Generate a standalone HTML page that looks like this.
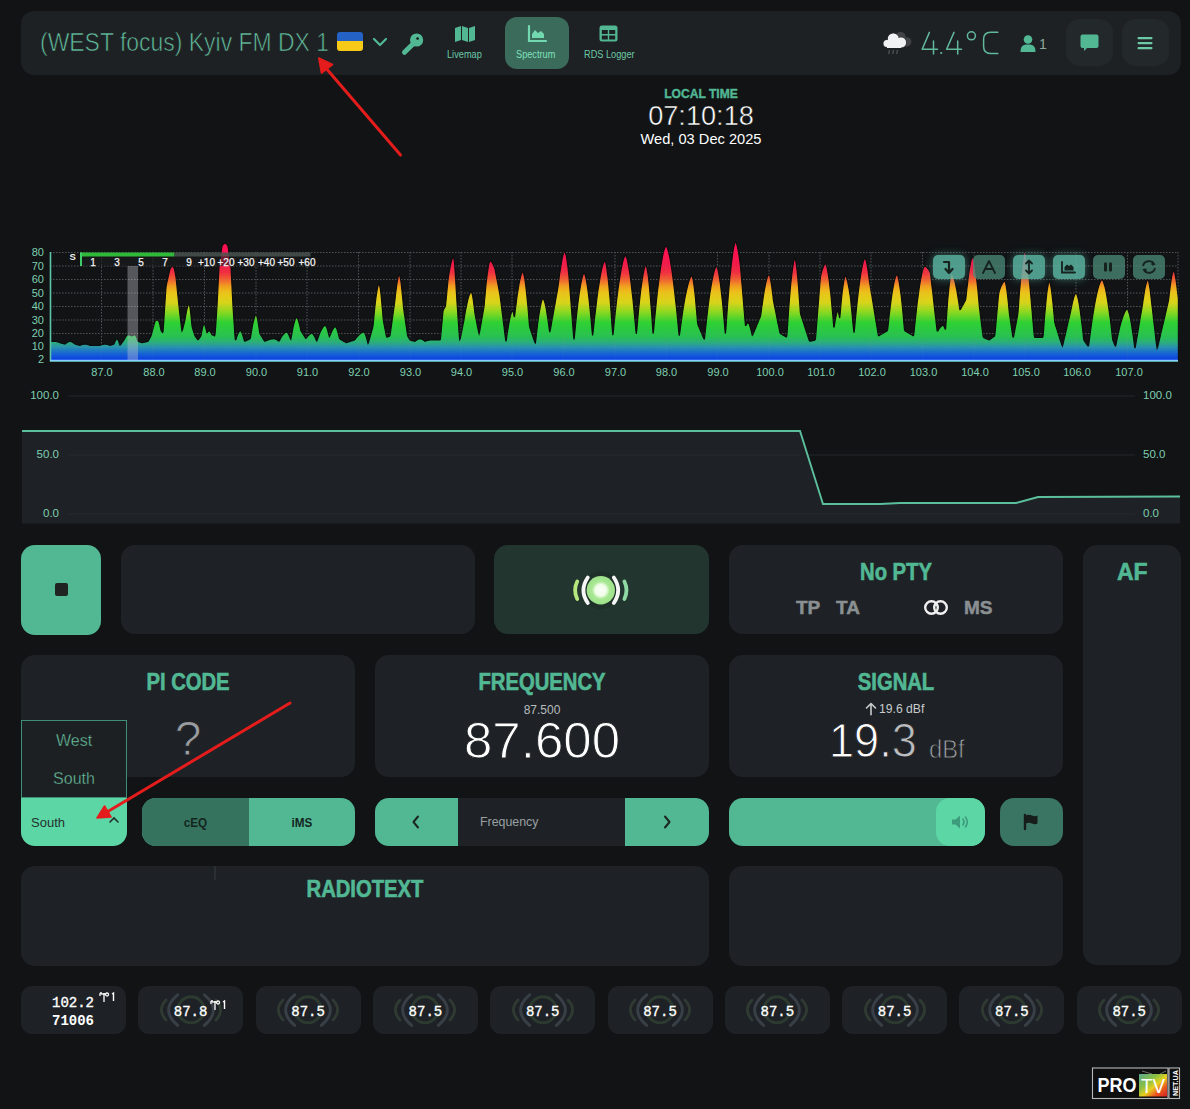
<!DOCTYPE html>
<html><head><meta charset="utf-8">
<style>
*{margin:0;padding:0;box-sizing:border-box}
html,body{width:1190px;height:1109px;overflow:hidden;background:#111315;font-family:"Liberation Sans",sans-serif}
.a{position:absolute}
.p{position:absolute;background:#1e2226;border-radius:14px}
.t{position:absolute;white-space:nowrap;line-height:1}
.c{transform-origin:center top}
.teal{color:#52b894}
.thin{-webkit-text-stroke:1.0px #1e2226}
.thin2{-webkit-text-stroke:0.8px #1e2226}
.h{font-weight:bold;color:#52b894;font-size:23px;-webkit-text-stroke:0.6px #52b894}
svg{position:absolute;overflow:visible}
</style></head><body>

<!-- HEADER -->
<div class="p" style="left:21px;top:11px;width:1160px;height:64px;border-radius:13px;background:#1d2124"></div>
<div class="t" id="title" style="left:40px;top:29px;font-size:26.5px;color:#62bd9c;-webkit-text-stroke:0.7px #1d2124;transform:scaleX(0.866);transform-origin:left top">(WEST focus) Kyiv FM DX 1</div>
<div class="a" style="left:337px;top:31.5px;width:25.5px;height:19.5px;border-radius:3px;overflow:hidden">
  <div style="height:9.5px;background:#2462c6"></div><div style="height:10px;background:#f6ca16"></div>
</div>
<svg style="left:372px;top:36px" width="16" height="12" viewBox="0 0 16 12"><path d="M2,3 L8,9 L14,3" fill="none" stroke="#52b894" stroke-width="2.2" stroke-linecap="round" stroke-linejoin="round"/></svg>
<!-- key -->
<svg style="left:0;top:0" width="1190" height="80" viewBox="0 0 1190 80">
  <path d="M412.5,44.5 L404.5,52.3" stroke="#52b894" stroke-width="5" stroke-linecap="round"/>
  <circle cx="416.6" cy="40" r="6.6" fill="#52b894"/>
  <circle cx="417.6" cy="38.6" r="1.4" fill="#1d2124"/>
</svg>
<!-- livemap -->
<svg style="left:454px;top:25px" width="22" height="17" viewBox="0 0 22 17">
  <path d="M1,3 L7,1 L7,15 L1,17 Z M8,1 L14,3 L14,17 L8,15 Z M15,3 L21,1 L21,15 L15,17 Z" fill="#52b894"/>
</svg>
<div class="t" style="left:447px;top:50px;font-size:10px;color:#6cc9a6;transform:scaleX(0.92);transform-origin:left top">Livemap</div>
<!-- spectrum active -->
<div class="a" style="left:505px;top:17px;width:64px;height:52px;border-radius:12px;background:#3a6b5b"></div>
<svg style="left:527px;top:25px" width="20" height="18" viewBox="0 0 20 18">
  <path d="M2,1 L2,16 L19,16" fill="none" stroke="#72d8b0" stroke-width="2.2" stroke-linecap="round"/>
  <path d="M5,13 L5,9 L8,5 L11,8 L14,6 L17,9 L17,13 Z" fill="#72d8b0"/>
</svg>
<div class="t" style="left:516px;top:50px;font-size:10px;color:#7fe0bb;transform:scaleX(0.92);transform-origin:left top">Spectrum</div>
<!-- rds logger -->
<svg style="left:599px;top:25px" width="19" height="17" viewBox="0 0 19 17">
  <rect x="0.5" y="0.5" width="18" height="16" rx="2.5" fill="#52b894"/>
  <rect x="2.8" y="5" width="6" height="4" fill="#1d2124"/><rect x="10.2" y="5" width="6" height="4" fill="#1d2124"/>
  <rect x="2.8" y="10.5" width="6" height="4" fill="#1d2124"/><rect x="10.2" y="10.5" width="6" height="4" fill="#1d2124"/>
</svg>
<div class="t" style="left:584px;top:50px;font-size:10px;color:#6cc9a6;transform:scaleX(0.92);transform-origin:left top">RDS Logger</div>
<!-- weather -->
<svg style="left:0;top:0" width="1190" height="80" viewBox="0 0 1190 80">
  <g fill="#404346"><circle cx="900.5" cy="37" r="5.2"/><circle cx="906.8" cy="41.8" r="4.6"/><rect x="897" y="40" width="10" height="6.5"/></g>
  <g fill="#f0f1f2" stroke="#1d2124" stroke-width="0.8"><circle cx="887.2" cy="43.5" r="3.8"/><circle cx="893.3" cy="38.8" r="5.6"/><circle cx="901" cy="42.5" r="5.2"/></g>
  <g fill="#f0f1f2"><rect x="887" y="42" width="14" height="6"/><circle cx="887.2" cy="43.5" r="3.6"/><circle cx="893.3" cy="38.8" r="5.4"/><circle cx="901" cy="42.5" r="5"/></g>
  <path d="M889.5,50 l-0.8,4 M893.5,50 l-0.8,4 M897.5,50 l-0.8,4" stroke="#4a4e52" stroke-width="1.4"/>
</svg>
<svg style="left:0;top:0" width="1190" height="80" viewBox="0 0 1190 80">
  <g fill="none" stroke="#62b89a" stroke-width="1.5" stroke-linecap="round" stroke-linejoin="round">
    <path d="M929.4,32.4 L922.2,49.2 H937.5 M933.5,41 V54"/>
    <path d="M954,32.4 L946.6,49.2 H961.5 M957.7,41 V54"/>
    <circle cx="971.4" cy="35.8" r="4"/>
    <path d="M997.8,32.2 H990.5 Q983.6,32.2 983.6,39.5 V46.2 Q983.6,53.4 990.5,53.4 H997.8"/>
  </g>
  <circle cx="941.2" cy="53" r="1.1" fill="#62b89a"/>
</svg>
<!-- person -->
<svg style="left:1020px;top:35px" width="16" height="17" viewBox="0 0 16 17">
  <circle cx="8" cy="4.5" r="4.3" fill="#52b894"/><path d="M0.5,17 C0.5,11 3,9.5 8,9.5 C13,9.5 15.5,11 15.5,17 Z" fill="#52b894"/>
</svg>
<div class="t" style="left:1039px;top:37px;font-size:14px;color:#8fa89c">1</div>
<!-- chat -->
<div class="a" style="left:1066px;top:19px;width:47px;height:47px;border-radius:14px;background:#23282b"></div>
<svg style="left:1080px;top:34px" width="19" height="18" viewBox="0 0 19 18">
  <path d="M2.5,0.5 H16.5 Q18.5,0.5 18.5,2.5 V12 Q18.5,14 16.5,14 H7 L4,17 L4,14 H2.5 Q0.5,14 0.5,12 V2.5 Q0.5,0.5 2.5,0.5 Z" fill="#52b894"/>
</svg>
<!-- menu -->
<div class="a" style="left:1122px;top:19px;width:47px;height:47px;border-radius:14px;background:#23282b"></div>
<svg style="left:1137px;top:36px" width="16" height="14" viewBox="0 0 16 14">
  <rect x="0.5" y="1" width="15" height="2.2" rx="1" fill="#6cc9a6"/><rect x="0.5" y="6" width="15" height="2.2" rx="1" fill="#6cc9a6"/><rect x="0.5" y="11" width="15" height="2.2" rx="1" fill="#6cc9a6"/>
</svg>

<!-- LOCAL TIME -->
<div class="t c" style="left:601px;width:200px;text-align:center;top:87px;font-size:13px;font-weight:bold;color:#52b894;-webkit-text-stroke:0.4px #52b894;transform:scaleX(0.93)">LOCAL TIME</div>
<div class="t c" style="left:601px;width:200px;text-align:center;top:102px;font-size:28px;color:#fff;-webkit-text-stroke:0.5px #111315;transform:scaleX(0.97)">07:10:18</div>
<div class="t c" style="left:601px;width:200px;text-align:center;top:131px;font-size:15px;color:#fff;transform:scaleX(0.975)">Wed, 03 Dec 2025</div>

<!-- SPECTRUM -->
<svg style="left:0;top:0" width="1190" height="400" viewBox="0 0 1190 400">
  <defs>
    <linearGradient id="g" gradientUnits="userSpaceOnUse" x1="0" y1="360" x2="0" y2="245">
      <stop offset="0" stop-color="#0a3ce6"/>
      <stop offset="0.058" stop-color="#1766d2"/>
      <stop offset="0.11" stop-color="#2790b0"/>
      <stop offset="0.15" stop-color="#2cac80"/>
      <stop offset="0.20" stop-color="#27c052"/>
      <stop offset="0.327" stop-color="#2fd132"/>
      <stop offset="0.42" stop-color="#8ed820"/>
      <stop offset="0.50" stop-color="#d8d41a"/>
      <stop offset="0.585" stop-color="#ecc418"/>
      <stop offset="0.64" stop-color="#f0a020"/>
      <stop offset="0.70" stop-color="#f06030"/>
      <stop offset="0.76" stop-color="#f03040"/>
      <stop offset="0.82" stop-color="#f01c48"/>
      <stop offset="0.94" stop-color="#ff1050"/>
    </linearGradient>
  </defs>
  
  <g stroke="#9aa0a4" stroke-width="1" stroke-dasharray="1.5,1.5" opacity="0.38">
    <path d="M50,252.5 H1178 M50,266 H1178 M50,279.5 H1178 M50,293 H1178 M50,306.5 H1178 M50,320 H1178 M50,333.5 H1178 M50,347 H1178"/>
    <path d="M101.5,252 V360 M153,252 V360 M204.5,252 V360 M256,252 V360 M307,252 V360 M358.5,252 V360 M410,252 V360 M461,252 V360 M512,252 V360 M563.5,252 V360 M615,252 V360 M666,252 V360 M717.5,252 V360 M769,252 V360 M820,252 V360 M871,252 V360 M922.5,252 V360 M974,252 V360 M1025,252 V360 M1076,252 V360 M1127.5,252 V360 M1178,252 V360"/>
  </g>
  <path d="M50.0,341.4 L50.5,341.4 L51.0,341.4 L51.5,341.4 L52.0,341.4 L52.5,341.4 L53.0,341.4 L53.5,341.4 L54.0,341.4 L54.5,341.4 L55.0,341.4 L55.5,341.4 L56.0,341.5 L56.5,341.6 L57.0,341.7 L57.5,341.8 L58.0,342.0 L58.5,342.1 L59.0,342.3 L59.5,342.5 L60.0,342.7 L60.5,342.8 L61.0,343.0 L61.5,343.1 L62.0,343.3 L62.5,343.4 L63.0,343.5 L63.5,343.7 L64.0,343.8 L64.5,343.9 L65.0,344.0 L65.5,343.6 L66.0,343.2 L66.5,342.9 L67.0,342.5 L67.5,342.2 L68.0,342.0 L68.5,341.7 L69.0,341.6 L69.5,341.4 L70.0,341.4 L70.5,341.4 L71.0,341.6 L71.5,341.7 L72.0,342.0 L72.5,342.2 L73.0,342.5 L73.5,342.9 L74.0,343.2 L74.5,343.6 L75.0,344.0 L75.5,344.2 L76.0,344.3 L76.5,344.5 L77.0,344.6 L77.5,344.7 L78.0,344.9 L78.5,345.0 L79.0,345.1 L79.5,345.3 L80.0,345.3 L80.5,345.2 L81.0,345.0 L81.5,344.8 L82.0,344.6 L82.5,344.5 L83.0,344.4 L83.5,344.2 L84.0,344.2 L84.5,344.1 L85.0,344.1 L85.5,344.1 L86.0,344.2 L86.5,344.2 L87.0,344.4 L87.5,344.5 L88.0,344.6 L88.5,344.8 L89.0,345.0 L89.5,345.2 L90.0,345.4 L90.5,345.4 L91.0,345.4 L91.5,345.4 L92.0,345.4 L92.5,345.4 L93.0,345.4 L93.5,345.4 L94.0,345.4 L94.5,345.4 L95.0,345.4 L95.5,345.4 L96.0,345.4 L96.5,345.4 L97.0,345.4 L97.5,345.4 L98.0,345.4 L98.5,345.4 L99.0,345.4 L99.5,345.4 L100.0,345.4 L100.5,345.2 L101.0,345.0 L101.5,344.8 L102.0,344.6 L102.5,344.5 L103.0,344.4 L103.5,344.2 L104.0,344.2 L104.5,344.1 L105.0,344.1 L105.5,344.1 L106.0,344.2 L106.5,344.2 L107.0,344.4 L107.5,344.5 L108.0,344.6 L108.5,344.8 L109.0,345.0 L109.5,345.2 L110.0,345.3 L110.5,345.2 L111.0,345.1 L111.5,344.9 L112.0,344.7 L112.5,344.6 L113.0,344.4 L113.5,344.2 L114.0,343.9 L114.5,342.7 L115.0,341.5 L115.5,340.4 L116.0,339.6 L116.5,339.0 L117.0,338.8 L117.5,339.1 L118.0,339.8 L118.5,340.9 L119.0,342.2 L119.5,343.7 L120.0,345.0 L120.5,344.7 L121.0,344.1 L121.5,343.4 L122.0,342.7 L122.5,342.0 L123.0,341.4 L123.5,340.7 L124.0,340.0 L124.5,339.0 L125.0,338.0 L125.5,337.1 L126.0,336.4 L126.5,335.7 L127.0,335.2 L127.5,334.9 L128.0,334.7 L128.5,334.7 L129.0,334.8 L129.5,334.9 L130.0,335.1 L130.5,335.3 L131.0,335.5 L131.5,335.7 L132.0,335.9 L132.5,335.6 L133.0,335.3 L133.5,335.1 L134.0,334.9 L134.5,334.7 L135.0,334.7 L135.5,335.1 L136.0,335.8 L136.5,336.8 L137.0,338.1 L137.5,339.7 L138.0,341.1 L138.5,341.5 L139.0,341.7 L139.5,341.9 L140.0,342.0 L140.5,342.2 L141.0,342.4 L141.5,342.5 L142.0,342.7 L142.5,342.6 L143.0,342.5 L143.5,342.4 L144.0,342.3 L144.5,342.2 L145.0,342.0 L145.5,341.9 L146.0,341.8 L146.5,341.7 L147.0,341.6 L147.5,341.5 L148.0,341.2 L148.5,340.5 L149.0,339.6 L149.5,338.7 L150.0,337.8 L150.5,336.9 L151.0,335.8 L151.5,334.1 L152.0,332.3 L152.5,330.4 L153.0,328.6 L153.5,326.7 L154.0,324.9 L154.5,323.0 L155.0,321.4 L155.5,320.9 L156.0,320.5 L156.5,320.3 L157.0,320.1 L157.5,319.9 L158.0,320.0 L158.5,320.5 L159.0,321.7 L159.5,323.3 L160.0,325.4 L160.5,327.9 L161.0,330.3 L161.5,331.3 L162.0,332.0 L162.5,332.6 L163.0,331.9 L163.5,325.5 L164.0,317.6 L164.5,309.8 L165.0,301.9 L165.5,294.1 L166.0,287.2 L166.5,284.0 L167.0,281.9 L167.5,279.7 L168.0,277.5 L168.5,275.3 L169.0,273.1 L169.5,270.9 L170.0,269.0 L170.5,268.1 L171.0,267.4 L171.5,266.9 L172.0,266.5 L172.5,266.2 L173.0,266.2 L173.5,266.7 L174.0,267.9 L174.5,269.5 L175.0,271.6 L175.5,274.1 L176.0,277.2 L176.5,281.7 L177.0,286.7 L177.5,291.6 L178.0,296.5 L178.5,301.5 L179.0,306.3 L179.5,310.7 L180.0,314.9 L180.5,319.2 L181.0,323.4 L181.5,327.7 L182.0,330.9 L182.5,329.9 L183.0,327.9 L183.5,325.9 L184.0,323.9 L184.5,321.9 L185.0,319.7 L185.5,316.7 L186.0,313.8 L186.5,311.2 L187.0,308.9 L187.5,307.0 L188.0,305.4 L188.5,304.3 L189.0,304.0 L189.5,305.1 L190.0,307.6 L190.5,311.1 L191.0,315.6 L191.5,320.8 L192.0,325.8 L192.5,328.1 L193.0,329.7 L193.5,331.3 L194.0,332.9 L194.5,334.4 L195.0,335.8 L195.5,336.7 L196.0,337.3 L196.5,338.0 L197.0,338.7 L197.5,339.4 L198.0,339.8 L198.5,339.4 L199.0,338.7 L199.5,338.0 L200.0,337.3 L200.5,336.7 L201.0,335.6 L201.5,332.9 L202.0,330.2 L202.5,327.8 L203.0,325.9 L203.5,324.6 L204.0,324.1 L204.5,324.5 L205.0,325.5 L205.5,326.9 L206.0,328.8 L206.5,330.9 L207.0,332.7 L207.5,332.3 L208.0,331.5 L208.5,330.9 L209.0,330.7 L209.5,330.9 L210.0,331.3 L210.5,331.9 L211.0,332.7 L211.5,333.6 L212.0,334.5 L212.5,334.9 L213.0,335.1 L213.5,335.3 L214.0,335.5 L214.5,335.8 L215.0,334.7 L215.5,328.6 L216.0,321.2 L216.5,313.8 L217.0,306.0 L217.5,296.3 L218.0,286.2 L218.5,276.1 L219.0,267.2 L219.5,262.7 L220.0,259.3 L220.5,256.0 L221.0,252.6 L221.5,249.2 L222.0,246.3 L222.5,245.2 L223.0,244.6 L223.5,244.1 L224.0,243.6 L224.5,243.4 L225.0,243.2 L225.5,243.4 L226.0,243.6 L226.5,244.1 L227.0,244.6 L227.5,245.2 L228.0,246.3 L228.5,249.2 L229.0,252.6 L229.5,256.0 L230.0,259.3 L230.5,262.7 L231.0,267.2 L231.5,276.1 L232.0,286.2 L232.5,296.3 L233.0,306.2 L233.6,315.1 L234.2,323.9 L234.7,332.6 L235.3,339.6 L235.8,339.7 L236.3,338.1 L236.8,336.6 L237.3,335.3 L237.8,334.1 L238.3,333.0 L238.8,332.1 L239.3,331.4 L239.8,330.9 L240.3,330.7 L240.8,331.0 L241.4,331.8 L241.9,332.8 L242.4,334.1 L242.9,335.6 L243.4,337.3 L244.0,339.3 L244.5,341.0 L245.0,341.1 L245.6,340.9 L246.1,340.6 L246.6,340.4 L247.2,340.1 L247.7,339.9 L248.3,339.7 L248.8,339.4 L249.3,339.2 L249.9,338.9 L250.4,338.1 L250.9,335.2 L251.4,331.9 L251.9,328.8 L252.4,326.0 L252.9,323.4 L253.5,321.1 L254.0,319.1 L254.5,317.4 L255.0,316.0 L255.5,315.0 L256.0,314.7 L256.5,315.4 L257.1,317.0 L257.6,319.2 L258.1,322.0 L258.6,325.4 L259.2,329.1 L259.7,332.7 L260.2,334.1 L260.7,334.9 L261.2,335.7 L261.7,336.5 L262.2,337.3 L262.7,338.1 L263.2,338.9 L263.7,339.8 L264.2,340.6 L264.7,341.2 L265.2,341.1 L265.7,340.9 L266.2,340.7 L266.8,340.5 L267.3,340.3 L267.8,340.1 L268.3,339.9 L268.8,339.7 L269.4,339.5 L269.9,339.4 L270.4,339.2 L270.9,339.1 L271.4,339.0 L271.9,338.9 L272.4,338.8 L273.0,338.8 L273.5,338.7 L274.0,338.7 L274.5,338.8 L275.0,338.9 L275.5,339.1 L276.0,339.3 L276.5,339.5 L277.0,339.8 L277.5,340.2 L278.0,340.5 L278.5,340.9 L279.0,341.1 L279.5,340.4 L280.0,339.4 L280.5,338.5 L281.0,337.6 L281.5,336.8 L282.0,336.0 L282.5,335.3 L283.1,334.6 L283.6,334.0 L284.1,333.5 L284.6,333.0 L285.1,332.6 L285.6,332.3 L286.1,332.1 L286.6,332.0 L287.1,332.3 L287.7,332.8 L288.2,333.6 L288.7,334.6 L289.2,335.7 L289.8,337.0 L290.3,338.5 L290.8,339.2 L291.3,336.7 L291.9,333.6 L292.4,330.7 L292.9,328.0 L293.4,325.6 L294.0,323.4 L294.5,321.5 L295.0,319.9 L295.5,318.6 L296.1,317.7 L296.6,317.3 L297.1,317.7 L297.7,318.6 L298.2,319.9 L298.7,321.5 L299.2,323.4 L299.8,325.6 L300.3,328.0 L300.8,330.3 L301.3,331.4 L301.8,332.2 L302.3,333.0 L302.8,333.8 L303.4,334.6 L303.9,335.5 L304.4,336.3 L304.9,337.1 L305.4,337.9 L305.9,338.4 L306.4,337.9 L307.0,337.2 L307.5,336.5 L308.0,335.9 L308.6,335.3 L309.1,334.8 L309.7,334.3 L310.2,333.9 L310.7,333.6 L311.3,333.4 L311.8,333.3 L312.3,333.5 L312.8,333.9 L313.3,334.4 L313.8,335.1 L314.3,335.9 L314.8,336.8 L315.3,337.8 L315.8,338.9 L316.3,340.1 L316.8,340.9 L317.3,339.8 L317.9,338.2 L318.4,336.7 L318.9,335.3 L319.4,333.9 L319.9,332.7 L320.5,331.5 L321.0,330.4 L321.5,329.4 L322.1,328.4 L322.6,327.6 L323.1,326.9 L323.6,326.3 L324.1,325.8 L324.7,325.4 L325.2,325.3 L325.7,325.7 L326.2,326.5 L326.8,327.7 L327.3,329.1 L327.8,330.8 L328.3,332.8 L328.9,335.0 L329.4,336.7 L329.9,335.8 L330.5,334.3 L331.0,333.0 L331.5,331.7 L332.1,330.6 L332.6,329.5 L333.2,328.6 L333.7,327.9 L334.2,327.3 L334.8,326.8 L335.3,326.7 L335.8,327.0 L336.4,327.9 L336.9,329.0 L337.4,330.5 L337.9,332.2 L338.4,334.1 L339.0,336.3 L339.5,338.3 L340.0,339.0 L340.5,339.3 L341.0,339.6 L341.6,339.9 L342.1,340.2 L342.6,340.5 L343.1,340.9 L343.6,341.2 L344.1,341.5 L344.7,341.8 L345.2,342.1 L345.7,342.4 L346.2,342.6 L346.7,342.5 L347.2,342.4 L347.8,342.2 L348.3,342.0 L348.8,341.9 L349.4,341.7 L349.9,341.5 L350.4,341.4 L350.9,341.2 L351.4,341.0 L352.0,340.9 L352.5,340.7 L353.0,340.5 L353.6,340.4 L354.1,340.2 L354.6,339.9 L355.1,339.3 L355.6,338.6 L356.2,337.9 L356.7,337.3 L357.2,336.7 L357.7,336.1 L358.2,335.5 L358.7,335.0 L359.2,334.5 L359.8,334.1 L360.3,333.7 L360.8,333.3 L361.3,332.9 L361.8,332.6 L362.3,332.4 L362.9,332.2 L363.4,332.0 L363.9,332.0 L364.4,332.4 L364.9,333.2 L365.4,334.4 L365.9,335.9 L366.5,337.6 L367.0,339.5 L367.5,341.7 L368.0,343.4 L368.5,342.3 L369.0,340.6 L369.5,338.8 L370.0,337.1 L370.5,335.3 L371.0,333.6 L371.5,331.8 L372.0,330.1 L372.5,328.3 L373.0,325.9 L373.5,320.9 L374.0,315.5 L374.5,310.4 L375.0,305.6 L375.5,301.3 L376.0,297.3 L376.5,293.8 L377.0,290.6 L377.5,288.0 L378.0,285.9 L378.5,284.4 L379.0,283.8 L379.5,284.9 L380.1,287.4 L380.6,290.9 L381.1,295.2 L381.6,300.4 L382.1,306.2 L382.7,312.8 L383.2,319.1 L383.8,322.8 L384.3,325.7 L384.9,328.6 L385.5,331.5 L386.0,334.4 L386.6,336.8 L387.2,337.1 L387.7,336.9 L388.3,336.7 L388.9,336.4 L389.4,336.2 L390.0,335.4 L390.5,332.4 L391.0,328.7 L391.5,325.1 L392.0,321.5 L392.5,317.8 L393.0,314.2 L393.5,310.6 L394.0,306.9 L394.5,303.3 L395.0,299.4 L395.5,294.7 L396.1,290.1 L396.6,286.0 L397.1,282.4 L397.6,279.3 L398.1,276.8 L398.7,275.1 L399.2,274.4 L399.7,275.4 L400.2,277.5 L400.8,280.6 L401.3,284.5 L401.8,289.1 L402.3,294.3 L402.9,300.1 L403.4,306.0 L403.9,310.1 L404.4,313.8 L405.0,317.5 L405.5,321.2 L406.0,324.9 L406.6,328.6 L407.1,332.3 L407.6,335.5 L408.2,337.0 L408.8,338.0 L409.4,339.0 L410.0,339.9 L410.5,340.2 L411.0,340.3 L411.5,340.4 L412.0,340.6 L412.5,340.7 L413.0,340.8 L413.5,341.0 L414.0,341.1 L414.5,341.2 L415.0,341.3 L415.5,340.9 L416.0,340.5 L416.5,340.2 L417.0,339.8 L417.5,339.5 L418.0,339.3 L418.5,339.1 L419.0,338.9 L419.5,338.8 L420.0,338.7 L420.5,338.8 L421.0,338.9 L421.5,339.1 L422.0,339.3 L422.5,339.5 L423.0,339.8 L423.5,340.2 L424.0,340.5 L424.5,340.9 L425.0,341.3 L425.5,341.2 L426.0,341.0 L426.5,340.8 L427.0,340.6 L427.5,340.5 L428.0,340.3 L428.5,340.2 L429.0,340.1 L429.5,340.1 L430.0,340.0 L430.5,340.0 L431.0,340.0 L431.5,340.0 L432.0,340.0 L432.5,340.0 L433.0,340.0 L433.5,340.0 L434.0,340.0 L434.5,340.0 L435.0,340.0 L435.5,340.0 L436.1,340.0 L436.6,340.0 L437.2,340.0 L437.7,340.0 L438.2,340.0 L438.8,340.0 L439.3,340.0 L439.9,340.0 L440.4,339.0 L440.9,334.1 L441.4,328.2 L442.0,322.3 L442.5,316.4 L443.0,311.3 L443.5,309.6 L444.0,308.8 L444.5,308.0 L445.0,307.2 L445.5,305.6 L446.0,301.0 L446.5,295.6 L447.0,290.3 L447.5,284.9 L448.0,279.8 L448.5,276.2 L449.0,273.1 L449.5,270.2 L450.0,267.5 L450.5,265.1 L451.0,262.9 L451.5,261.0 L452.0,259.4 L452.5,258.1 L453.0,257.2 L453.5,257.1 L454.1,259.7 L454.7,265.0 L455.2,272.6 L455.8,282.0 L456.4,292.4 L456.9,301.0 L457.5,309.1 L458.0,317.2 L458.6,325.2 L459.1,333.3 L459.7,339.6 L460.2,338.7 L460.8,336.0 L461.3,333.3 L461.9,330.6 L462.4,327.9 L462.9,325.2 L463.5,322.5 L464.0,319.8 L464.5,316.6 L465.0,313.5 L465.5,310.6 L466.1,307.8 L466.6,305.3 L467.1,302.9 L467.6,300.6 L468.1,298.6 L468.6,296.8 L469.1,295.2 L469.7,293.9 L470.2,292.8 L470.7,292.0 L471.2,291.8 L471.7,292.6 L472.3,294.5 L472.8,297.0 L473.3,300.2 L473.8,304.0 L474.4,308.4 L474.9,312.8 L475.4,315.8 L475.9,318.5 L476.5,321.2 L477.0,323.9 L477.5,326.6 L478.1,329.3 L478.6,332.0 L479.1,333.7 L479.6,331.8 L480.1,329.0 L480.6,326.2 L481.1,323.3 L481.6,320.5 L482.1,317.7 L482.6,314.9 L483.1,312.0 L483.6,309.2 L484.1,305.8 L484.6,299.8 L485.2,293.6 L485.7,287.8 L486.2,282.4 L486.8,277.6 L487.3,273.2 L487.9,269.4 L488.4,266.1 L488.9,263.5 L489.5,261.7 L490.0,260.8 L490.5,260.9 L491.0,261.3 L491.5,261.8 L492.0,262.5 L492.5,263.3 L493.0,264.2 L493.5,265.2 L494.0,266.3 L494.5,267.5 L495.0,269.0 L495.5,271.4 L496.0,274.1 L496.5,276.8 L497.0,279.5 L497.6,282.2 L498.1,284.9 L498.6,287.6 L499.1,290.3 L499.6,292.9 L500.1,295.9 L500.6,299.9 L501.2,304.2 L501.7,308.5 L502.2,312.8 L502.8,317.0 L503.3,321.3 L503.9,325.6 L504.4,329.9 L504.9,334.2 L505.5,338.4 L506.0,341.3 L506.5,338.8 L507.0,335.0 L507.5,331.4 L508.1,328.1 L508.6,325.0 L509.1,322.1 L509.6,319.5 L510.1,317.2 L510.6,315.1 L511.2,313.4 L511.7,312.0 L512.2,311.0 L512.7,310.7 L513.3,312.0 L513.8,314.8 L514.4,317.1 L514.9,313.8 L515.4,309.2 L516.0,304.9 L516.5,300.8 L517.0,296.8 L517.5,293.1 L518.1,289.7 L518.6,286.5 L519.1,283.5 L519.6,280.8 L520.2,278.4 L520.7,276.3 L521.2,274.5 L521.8,273.0 L522.3,272.0 L522.8,271.6 L523.3,272.4 L523.8,274.1 L524.3,276.4 L524.9,279.4 L525.4,282.9 L525.9,286.9 L526.4,291.4 L526.9,296.3 L527.4,301.6 L528.0,307.3 L528.5,313.4 L529.0,319.8 L529.5,325.7 L530.0,328.2 L530.6,329.8 L531.1,331.3 L531.6,332.9 L532.2,334.5 L532.7,336.1 L533.3,337.7 L533.8,339.3 L534.3,340.9 L534.9,342.5 L535.4,343.0 L535.9,339.2 L536.4,334.5 L536.9,330.0 L537.4,325.8 L537.9,321.8 L538.4,318.1 L538.9,314.6 L539.5,311.4 L540.0,308.5 L540.5,305.8 L541.0,303.6 L541.5,301.6 L542.0,300.0 L542.5,299.0 L543.0,298.5 L543.5,298.9 L544.0,300.0 L544.5,301.5 L545.1,303.4 L545.6,305.6 L546.1,308.1 L546.6,311.0 L547.1,314.1 L547.6,317.4 L548.2,321.1 L548.7,324.9 L549.2,329.0 L549.7,332.1 L550.2,330.4 L550.8,327.4 L551.3,324.5 L551.8,321.5 L552.3,318.6 L552.9,315.6 L553.4,312.7 L553.9,309.8 L554.4,306.8 L555.0,303.9 L555.5,300.9 L556.0,298.0 L556.5,295.1 L557.1,292.1 L557.6,289.2 L558.1,286.0 L558.6,281.9 L559.1,277.8 L559.6,274.0 L560.2,270.4 L560.7,267.0 L561.2,263.9 L561.7,261.1 L562.2,258.5 L562.7,256.3 L563.3,254.4 L563.8,252.9 L564.3,251.9 L564.8,251.5 L565.3,252.2 L565.8,254.0 L566.4,256.4 L566.9,259.5 L567.4,263.1 L568.0,267.2 L568.5,271.8 L569.0,277.0 L569.5,283.3 L570.0,289.7 L570.5,296.2 L571.0,302.6 L571.5,309.1 L572.0,315.5 L572.5,322.0 L573.0,328.5 L573.5,334.9 L574.0,339.4 L574.5,335.8 L575.0,330.5 L575.5,325.3 L576.0,320.3 L576.5,315.5 L577.0,310.9 L577.5,306.5 L578.0,302.3 L578.5,298.4 L579.0,294.7 L579.6,291.2 L580.1,287.9 L580.6,285.0 L581.1,282.2 L581.6,279.8 L582.1,277.6 L582.6,275.8 L583.1,274.4 L583.6,273.4 L584.1,273.0 L584.6,273.5 L585.1,274.8 L585.6,276.5 L586.1,278.8 L586.6,281.4 L587.1,284.4 L587.6,287.8 L588.1,291.4 L588.6,295.4 L589.1,299.7 L589.6,304.3 L590.1,309.2 L590.6,314.3 L591.1,319.7 L591.6,325.3 L592.1,331.2 L592.6,335.4 L593.1,332.2 L593.6,327.1 L594.1,322.2 L594.6,317.4 L595.2,312.8 L595.7,308.4 L596.2,304.1 L596.7,300.0 L597.2,296.0 L597.7,292.2 L598.2,288.6 L598.8,285.1 L599.3,281.9 L599.8,278.8 L600.3,275.9 L600.8,273.2 L601.3,270.7 L601.8,268.5 L602.3,266.5 L602.9,264.7 L603.4,263.2 L603.9,262.0 L604.4,261.2 L604.9,260.9 L605.4,261.7 L606.0,263.6 L606.5,266.2 L607.0,269.4 L607.5,273.3 L608.1,277.7 L608.6,282.5 L609.1,287.9 L609.6,293.7 L610.2,300.0 L610.7,306.7 L611.2,313.8 L611.7,321.3 L612.3,329.1 L612.8,335.1 L613.3,332.0 L613.8,326.8 L614.3,321.8 L614.8,316.8 L615.3,312.1 L615.8,307.5 L616.3,303.0 L616.8,298.7 L617.3,294.6 L617.8,290.6 L618.3,286.8 L618.8,283.2 L619.4,279.8 L619.9,276.5 L620.4,273.4 L620.9,270.5 L621.4,267.8 L621.9,265.4 L622.4,263.1 L622.9,261.1 L623.4,259.3 L623.9,257.8 L624.4,256.6 L624.9,255.8 L625.4,255.4 L625.9,255.9 L626.4,257.0 L627.0,258.6 L627.5,260.6 L628.0,262.9 L628.5,265.6 L629.0,268.5 L629.6,271.8 L630.1,275.3 L630.6,279.1 L631.1,283.1 L631.6,287.4 L632.1,291.9 L632.7,296.7 L633.2,301.6 L633.7,306.8 L634.2,312.3 L634.7,317.9 L635.3,323.7 L635.8,329.8 L636.3,333.9 L636.8,329.9 L637.3,324.1 L637.8,318.4 L638.3,313.0 L638.8,307.8 L639.3,302.9 L639.8,298.1 L640.3,293.7 L640.8,289.5 L641.4,285.5 L641.9,281.9 L642.4,278.5 L642.9,275.4 L643.4,272.6 L643.9,270.2 L644.4,268.2 L644.9,266.5 L645.4,265.4 L645.9,264.9 L646.4,265.8 L646.9,267.7 L647.4,270.4 L648.0,273.8 L648.5,277.8 L649.0,282.4 L649.5,287.5 L650.0,293.1 L650.5,299.2 L651.0,305.7 L651.6,312.7 L652.1,320.0 L652.6,327.9 L653.1,333.6 L653.6,330.1 L654.1,324.4 L654.6,318.9 L655.2,313.5 L655.7,308.3 L656.2,303.2 L656.7,298.3 L657.2,293.6 L657.7,289.1 L658.3,284.7 L658.8,280.5 L659.3,276.5 L659.8,272.8 L660.3,269.2 L660.8,265.8 L661.4,262.6 L661.9,259.7 L662.4,256.9 L662.9,254.5 L663.4,252.3 L663.9,250.3 L664.5,248.7 L665.0,247.3 L665.5,246.4 L666.0,246.0 L666.5,246.4 L667.0,247.3 L667.5,248.5 L668.0,250.1 L668.5,251.9 L669.0,254.1 L669.6,256.4 L670.1,259.0 L670.6,261.8 L671.1,264.8 L671.6,268.0 L672.1,271.4 L672.6,275.0 L673.1,278.8 L673.6,282.8 L674.1,287.0 L674.6,291.3 L675.1,295.8 L675.6,300.4 L676.2,305.2 L676.7,310.2 L677.2,315.3 L677.7,320.6 L678.2,326.0 L678.7,331.6 L679.2,335.7 L679.7,333.3 L680.2,329.4 L680.7,325.6 L681.2,321.9 L681.7,318.3 L682.2,314.8 L682.7,311.5 L683.2,308.2 L683.7,305.1 L684.2,302.1 L684.7,299.3 L685.2,296.5 L685.8,293.9 L686.3,291.5 L686.8,289.1 L687.3,287.0 L687.8,284.9 L688.3,283.1 L688.8,281.4 L689.3,279.8 L689.8,278.5 L690.3,277.4 L690.8,276.5 L691.3,275.8 L691.8,275.7 L692.3,276.6 L692.9,278.5 L693.4,281.3 L693.9,284.7 L694.4,288.7 L695.0,293.4 L695.5,298.5 L696.0,304.2 L696.5,310.3 L697.1,316.9 L697.6,322.9 L698.1,325.1 L698.6,326.4 L699.2,327.6 L699.7,328.9 L700.2,330.1 L700.7,331.3 L701.3,332.6 L701.8,333.8 L702.3,335.1 L702.8,336.3 L703.4,337.5 L703.9,338.8 L704.4,339.0 L704.9,335.0 L705.4,330.2 L705.9,325.4 L706.4,320.8 L706.9,316.4 L707.4,312.1 L707.9,308.0 L708.4,304.0 L708.9,300.1 L709.4,296.5 L709.9,293.0 L710.5,289.7 L711.0,286.5 L711.5,283.5 L712.0,280.7 L712.5,278.2 L713.0,275.8 L713.5,273.6 L714.0,271.6 L714.5,269.9 L715.0,268.5 L715.5,267.3 L716.0,266.5 L716.5,266.2 L717.0,266.8 L717.5,268.2 L718.1,270.1 L718.6,272.5 L719.1,275.4 L719.6,278.7 L720.2,282.3 L720.7,286.3 L721.2,290.6 L721.7,295.2 L722.3,300.2 L722.8,305.5 L723.3,311.0 L723.8,316.9 L724.4,323.0 L724.9,329.4 L725.4,333.6 L725.9,328.4 L726.4,321.0 L726.9,313.9 L727.4,307.0 L727.9,300.5 L728.4,294.2 L728.9,288.1 L729.4,282.4 L729.9,277.0 L730.5,271.9 L731.0,267.1 L731.5,262.7 L732.0,258.6 L732.5,254.8 L733.0,251.5 L733.5,248.5 L734.0,246.0 L734.5,244.0 L735.0,242.6 L735.5,242.0 L736.0,242.5 L736.5,243.6 L737.0,245.2 L737.5,247.2 L738.0,249.6 L738.5,252.3 L739.0,255.3 L739.5,258.6 L740.0,262.2 L740.5,266.4 L741.0,272.1 L741.5,278.2 L742.0,284.2 L742.5,290.3 L743.0,296.3 L743.5,302.4 L744.0,308.4 L744.5,314.5 L745.0,320.5 L745.5,325.4 L746.0,325.4 L746.5,324.3 L747.0,323.5 L747.5,322.9 L748.0,322.7 L748.5,323.1 L749.1,324.0 L749.6,325.3 L750.1,326.9 L750.7,328.8 L751.2,330.9 L751.8,333.4 L752.3,335.3 L752.8,334.7 L753.3,333.5 L753.9,332.2 L754.4,330.9 L754.9,329.7 L755.5,328.4 L756.0,327.2 L756.5,325.9 L757.0,324.6 L757.5,323.4 L758.1,322.1 L758.6,320.9 L759.1,319.6 L759.7,318.3 L760.2,317.1 L760.7,315.3 L761.2,311.6 L761.7,307.6 L762.3,303.8 L762.8,300.1 L763.3,296.6 L763.8,293.4 L764.3,290.3 L764.9,287.4 L765.4,284.8 L765.9,282.4 L766.4,280.3 L766.9,278.4 L767.4,276.8 L768.0,275.5 L768.5,274.6 L769.0,274.3 L769.5,275.1 L770.1,276.8 L770.6,279.3 L771.1,282.4 L771.7,286.0 L772.2,290.1 L772.8,294.7 L773.3,299.3 L773.8,302.3 L774.3,304.8 L774.8,307.4 L775.4,310.0 L775.9,312.6 L776.4,315.2 L776.9,317.8 L777.4,320.4 L777.9,323.0 L778.5,325.5 L779.0,328.1 L779.5,330.7 L780.0,332.9 L780.5,333.6 L781.0,333.9 L781.6,334.2 L782.1,334.5 L782.6,334.9 L783.1,335.2 L783.7,335.5 L784.2,335.8 L784.7,336.1 L785.2,336.4 L785.8,336.7 L786.3,337.0 L786.8,335.9 L787.3,329.4 L787.8,321.7 L788.3,314.4 L788.8,307.4 L789.3,300.8 L789.8,294.6 L790.3,288.8 L790.8,283.3 L791.4,278.3 L791.9,273.8 L792.4,269.7 L792.9,266.1 L793.4,263.1 L793.9,260.7 L794.4,259.0 L794.9,258.3 L795.4,259.4 L796.0,262.0 L796.5,265.7 L797.1,270.3 L797.6,275.7 L798.1,281.8 L798.7,288.7 L799.2,296.2 L799.8,304.4 L800.3,311.9 L800.8,314.7 L801.3,316.3 L801.8,317.8 L802.3,319.4 L802.9,321.0 L803.4,322.5 L803.9,324.1 L804.4,325.7 L804.9,327.2 L805.4,328.8 L805.9,330.4 L806.4,332.0 L806.9,333.5 L807.5,335.1 L808.0,336.7 L808.5,338.2 L809.0,339.8 L809.5,341.1 L810.0,341.2 L810.6,341.1 L811.1,341.0 L811.6,340.9 L812.2,340.8 L812.7,340.6 L813.3,340.5 L813.8,340.4 L814.3,340.3 L814.9,340.1 L815.4,339.0 L815.9,333.7 L816.4,327.4 L816.9,321.1 L817.4,314.7 L817.9,308.4 L818.4,302.1 L818.9,295.8 L819.4,289.5 L819.9,283.1 L820.4,277.5 L820.9,274.7 L821.4,272.7 L821.9,270.9 L822.4,269.2 L823.0,267.7 L823.5,266.4 L824.0,265.2 L824.5,264.3 L825.0,263.7 L825.5,263.5 L826.0,264.2 L826.5,265.6 L827.1,267.6 L827.6,270.1 L828.1,273.1 L828.6,276.5 L829.2,280.3 L829.7,284.4 L830.2,288.9 L830.8,293.8 L831.3,298.9 L831.8,304.4 L832.3,310.2 L832.9,316.3 L833.4,322.7 L833.9,327.5 L834.4,325.6 L834.9,322.2 L835.4,319.2 L836.0,316.5 L836.5,314.2 L837.0,312.4 L837.5,311.2 L838.0,310.8 L838.6,312.3 L839.1,315.5 L839.7,318.0 L840.2,313.5 L840.7,307.4 L841.2,301.8 L841.7,296.6 L842.2,291.9 L842.8,287.6 L843.3,283.9 L843.8,280.8 L844.3,278.2 L844.8,276.5 L845.3,275.7 L845.8,276.1 L846.4,277.2 L846.9,278.9 L847.5,280.9 L848.0,283.2 L848.5,285.9 L849.1,289.0 L849.6,292.3 L850.2,295.9 L850.7,300.0 L851.2,305.5 L851.8,311.3 L852.4,317.2 L852.9,323.0 L853.5,328.8 L854.0,332.7 L854.5,329.0 L855.0,323.5 L855.5,318.2 L856.0,313.1 L856.5,308.1 L857.0,303.3 L857.5,298.8 L858.0,294.4 L858.5,290.2 L859.0,286.2 L859.5,282.4 L860.0,278.9 L860.5,275.6 L861.0,272.5 L861.5,269.6 L862.0,267.0 L862.5,264.7 L863.0,262.6 L863.5,260.9 L864.0,259.5 L864.5,258.5 L865.0,258.2 L865.5,258.8 L866.0,260.3 L866.6,262.3 L867.1,264.9 L867.6,268.0 L868.2,271.4 L868.7,275.3 L869.2,279.3 L869.7,282.6 L870.2,285.8 L870.7,288.9 L871.2,292.1 L871.8,295.2 L872.3,298.3 L872.8,301.5 L873.3,304.6 L873.8,307.7 L874.3,310.9 L874.8,314.0 L875.3,317.2 L875.8,320.3 L876.4,323.4 L876.9,326.6 L877.4,329.7 L877.9,332.9 L878.4,335.4 L878.9,335.7 L879.4,335.4 L879.9,335.1 L880.4,334.8 L881.0,334.5 L881.5,334.2 L882.0,333.9 L882.5,333.6 L883.0,333.3 L883.5,333.0 L884.0,332.7 L884.5,332.4 L885.0,332.1 L885.6,331.8 L886.1,331.5 L886.6,331.2 L887.1,330.9 L887.6,329.8 L888.1,325.6 L888.6,320.7 L889.1,316.0 L889.7,311.5 L890.2,307.2 L890.7,303.1 L891.2,299.2 L891.7,295.6 L892.2,292.2 L892.8,289.0 L893.3,286.1 L893.8,283.4 L894.3,281.0 L894.8,278.9 L895.4,277.1 L895.9,275.7 L896.4,274.7 L896.9,274.3 L897.4,274.9 L897.9,276.2 L898.4,278.2 L898.9,280.6 L899.4,283.4 L899.9,286.6 L900.4,290.2 L901.0,294.2 L901.5,298.5 L902.0,303.1 L902.5,308.0 L903.0,313.3 L903.5,318.8 L904.0,324.6 L904.5,329.6 L905.0,330.9 L905.5,331.2 L906.0,331.5 L906.5,331.8 L907.1,332.1 L907.6,332.4 L908.1,332.7 L908.6,333.0 L909.1,333.3 L909.6,333.6 L910.1,333.9 L910.6,334.2 L911.1,334.5 L911.7,334.8 L912.2,335.1 L912.7,335.4 L913.2,335.7 L913.7,335.0 L914.2,330.6 L914.7,325.4 L915.3,320.3 L915.8,315.4 L916.3,310.7 L916.8,306.2 L917.3,301.9 L917.9,297.8 L918.4,293.9 L918.9,290.1 L919.4,286.6 L919.9,283.4 L920.4,280.3 L921.0,277.5 L921.5,274.9 L922.0,272.6 L922.5,270.6 L923.0,268.9 L923.6,267.6 L924.1,266.6 L924.6,266.1 L925.1,266.2 L925.7,266.5 L926.2,266.9 L926.7,267.3 L927.3,267.9 L927.8,268.5 L928.4,269.3 L928.9,270.0 L929.4,270.9 L930.0,271.8 L930.5,273.4 L931.0,277.3 L931.5,281.9 L932.0,286.4 L932.6,291.0 L933.1,295.5 L933.6,300.1 L934.1,304.6 L934.6,309.2 L935.1,313.7 L935.7,318.3 L936.2,322.9 L936.7,327.4 L937.2,331.0 L937.7,331.0 L938.3,330.1 L938.8,329.2 L939.3,328.4 L939.9,327.7 L940.4,327.1 L941.0,326.5 L941.5,326.0 L942.0,325.7 L942.6,325.4 L943.1,325.3 L943.6,325.7 L944.1,326.5 L944.6,327.6 L945.1,329.0 L945.6,328.9 L946.1,322.3 L946.7,314.4 L947.2,307.1 L947.7,300.3 L948.3,294.2 L948.8,288.6 L949.4,283.8 L949.9,279.7 L950.4,276.4 L951.0,274.1 L951.5,273.0 L952.0,273.2 L952.5,274.0 L953.1,275.2 L953.6,276.6 L954.1,278.3 L954.6,280.3 L955.2,282.4 L955.7,284.8 L956.2,287.4 L956.8,290.1 L957.3,293.1 L957.8,296.2 L958.3,299.5 L958.9,303.0 L959.4,306.7 L959.9,309.6 L960.4,309.5 L961.0,308.5 L961.5,307.5 L962.0,306.5 L962.6,305.5 L963.1,304.6 L963.7,303.6 L964.2,302.6 L964.7,301.6 L965.3,300.7 L965.8,299.0 L966.3,294.4 L966.8,289.4 L967.4,284.6 L967.9,280.1 L968.4,276.0 L968.9,272.2 L969.5,268.7 L970.0,265.6 L970.5,262.9 L971.0,260.5 L971.6,258.7 L972.1,257.4 L972.6,256.9 L973.1,257.5 L973.6,259.0 L974.1,261.2 L974.7,263.8 L975.2,267.0 L975.7,270.6 L976.2,274.6 L976.7,279.0 L977.2,283.8 L977.8,289.0 L978.3,294.5 L978.8,300.3 L979.3,306.1 L979.9,310.8 L980.4,315.2 L981.0,319.7 L981.5,324.1 L982.1,328.5 L982.6,332.9 L983.2,336.6 L983.7,337.6 L984.3,337.8 L984.8,338.1 L985.3,338.3 L985.8,338.6 L986.4,338.8 L986.9,339.0 L987.4,339.3 L987.9,339.5 L988.5,339.8 L989.0,339.9 L989.5,339.7 L990.1,339.3 L990.6,338.9 L991.1,338.6 L991.6,338.2 L992.2,337.8 L992.7,337.5 L993.2,337.1 L993.7,336.7 L994.3,336.4 L994.8,335.0 L995.4,329.8 L995.9,323.7 L996.5,317.5 L997.0,311.4 L997.6,305.2 L998.1,299.1 L998.7,293.7 L999.2,291.3 L999.7,289.8 L1000.2,288.4 L1000.7,287.1 L1001.2,285.8 L1001.8,284.7 L1002.3,283.7 L1002.8,282.8 L1003.3,282.1 L1003.8,281.5 L1004.3,281.1 L1004.8,281.0 L1005.3,281.9 L1005.8,283.7 L1006.3,286.2 L1006.8,289.4 L1007.3,293.2 L1007.8,297.5 L1008.3,302.2 L1008.8,307.5 L1009.3,312.8 L1009.9,316.8 L1010.4,320.4 L1011.0,324.1 L1011.5,327.7 L1012.1,331.4 L1012.6,335.0 L1013.2,337.6 L1013.7,335.8 L1014.3,333.0 L1014.8,330.2 L1015.3,327.3 L1015.9,324.5 L1016.4,321.6 L1016.9,318.8 L1017.5,316.0 L1018.0,312.3 L1018.5,305.5 L1019.0,298.3 L1019.5,291.5 L1020.1,285.1 L1020.6,279.1 L1021.1,273.6 L1021.6,268.6 L1022.1,264.1 L1022.6,260.2 L1023.2,256.9 L1023.7,254.2 L1024.2,252.3 L1024.7,251.5 L1025.2,252.2 L1025.8,253.9 L1026.3,256.2 L1026.8,259.2 L1027.3,262.7 L1027.9,266.7 L1028.4,271.1 L1028.9,276.0 L1029.4,281.3 L1030.0,286.9 L1030.5,293.0 L1031.1,299.3 L1031.6,305.6 L1032.2,312.0 L1032.7,318.3 L1033.3,324.7 L1033.8,331.0 L1034.4,336.3 L1034.9,337.3 L1035.4,337.3 L1035.9,337.3 L1036.4,337.3 L1037.0,337.3 L1037.5,337.3 L1038.0,337.3 L1038.5,337.3 L1039.0,337.3 L1039.5,337.3 L1040.0,337.3 L1040.5,337.3 L1041.1,337.3 L1041.6,337.3 L1042.1,337.3 L1042.6,337.3 L1043.1,336.1 L1043.6,329.9 L1044.1,322.7 L1044.6,316.1 L1045.2,309.9 L1045.7,304.1 L1046.2,298.9 L1046.7,294.3 L1047.2,290.2 L1047.8,286.7 L1048.3,283.9 L1048.8,282.0 L1049.3,281.2 L1049.8,282.0 L1050.4,283.9 L1050.9,286.7 L1051.5,290.1 L1052.0,294.2 L1052.5,298.9 L1053.1,304.1 L1053.6,309.8 L1054.2,316.0 L1054.7,321.7 L1055.2,324.2 L1055.7,325.8 L1056.2,327.4 L1056.8,329.0 L1057.3,330.6 L1057.8,332.2 L1058.3,333.8 L1058.8,335.5 L1059.3,337.1 L1059.8,338.7 L1060.3,340.3 L1060.9,341.9 L1061.4,343.5 L1061.9,345.1 L1062.4,346.1 L1062.9,344.5 L1063.4,342.3 L1063.9,340.1 L1064.4,337.9 L1065.0,335.7 L1065.5,333.5 L1066.0,331.2 L1066.5,329.0 L1067.0,326.8 L1067.5,324.6 L1068.0,322.4 L1068.5,320.2 L1069.1,318.0 L1069.6,315.7 L1070.1,313.5 L1070.6,311.3 L1071.1,309.0 L1071.6,306.3 L1072.2,303.7 L1072.7,301.3 L1073.3,299.1 L1073.8,297.2 L1074.4,295.6 L1074.9,294.4 L1075.5,293.5 L1076.0,293.1 L1076.5,293.6 L1077.0,294.7 L1077.5,296.3 L1078.1,298.3 L1078.6,300.7 L1079.1,303.4 L1079.6,306.4 L1080.1,309.7 L1080.6,313.3 L1081.1,317.1 L1081.6,321.2 L1082.2,325.6 L1082.7,330.2 L1083.2,335.0 L1083.7,339.3 L1084.2,340.8 L1084.8,341.5 L1085.3,342.3 L1085.8,343.0 L1086.4,343.8 L1086.9,344.5 L1087.4,345.3 L1088.0,346.0 L1088.5,346.0 L1089.0,342.7 L1089.5,338.7 L1090.0,334.9 L1090.5,331.1 L1091.0,327.5 L1091.5,323.9 L1092.0,320.5 L1092.5,317.2 L1093.0,314.0 L1093.5,310.9 L1094.0,307.9 L1094.5,305.0 L1095.0,302.3 L1095.5,299.7 L1096.0,297.2 L1096.5,294.8 L1097.0,292.6 L1097.5,290.5 L1098.0,288.6 L1098.5,286.8 L1099.0,285.1 L1099.5,283.7 L1100.0,282.4 L1100.5,281.3 L1101.0,280.5 L1101.5,279.8 L1102.0,279.6 L1102.5,280.0 L1103.0,280.8 L1103.5,282.0 L1104.0,283.5 L1104.5,285.2 L1105.1,287.2 L1105.6,289.4 L1106.1,291.8 L1106.6,294.5 L1107.1,297.3 L1107.6,300.4 L1108.1,303.6 L1108.6,307.0 L1109.1,310.5 L1109.6,314.3 L1110.2,318.2 L1110.7,322.2 L1111.2,326.5 L1111.7,330.8 L1112.2,335.4 L1112.7,339.5 L1113.3,341.4 L1113.9,342.7 L1114.4,344.1 L1115.0,345.4 L1115.6,346.1 L1116.1,344.1 L1116.6,341.5 L1117.1,339.0 L1117.6,336.6 L1118.1,334.2 L1118.6,332.0 L1119.1,329.8 L1119.6,327.7 L1120.1,325.7 L1120.6,323.8 L1121.1,322.0 L1121.7,320.3 L1122.2,318.6 L1122.7,317.1 L1123.2,315.7 L1123.7,314.4 L1124.2,313.2 L1124.7,312.1 L1125.2,311.2 L1125.7,310.4 L1126.2,309.8 L1126.7,309.3 L1127.2,309.2 L1127.7,309.6 L1128.2,310.6 L1128.7,312.0 L1129.3,313.7 L1129.8,315.7 L1130.3,318.0 L1130.8,320.6 L1131.3,323.4 L1131.8,326.5 L1132.3,329.8 L1132.8,333.3 L1133.4,337.0 L1133.9,341.0 L1134.4,345.1 L1134.9,348.2 L1135.4,346.4 L1135.9,343.3 L1136.4,340.3 L1137.0,337.2 L1137.5,334.2 L1138.0,331.1 L1138.5,328.1 L1139.0,325.1 L1139.5,322.0 L1140.0,319.0 L1140.5,315.9 L1141.1,312.9 L1141.6,309.8 L1142.1,306.8 L1142.6,303.6 L1143.1,299.9 L1143.7,296.3 L1144.2,293.0 L1144.7,290.0 L1145.2,287.3 L1145.8,284.9 L1146.3,282.9 L1146.8,281.3 L1147.4,280.1 L1147.9,279.8 L1148.5,280.7 L1149.0,282.9 L1149.6,286.1 L1150.2,289.9 L1150.7,294.5 L1151.3,299.6 L1151.8,304.2 L1152.4,308.7 L1152.9,313.2 L1153.4,317.8 L1153.9,322.3 L1154.5,326.8 L1155.0,331.3 L1155.5,335.9 L1156.0,340.4 L1156.6,344.9 L1157.1,348.3 L1157.6,347.3 L1158.1,345.1 L1158.6,342.9 L1159.1,340.8 L1159.6,338.6 L1160.1,336.5 L1160.6,334.3 L1161.1,332.1 L1161.6,330.0 L1162.1,327.8 L1162.6,325.6 L1163.2,323.5 L1163.7,321.3 L1164.2,319.1 L1164.7,317.0 L1165.2,314.8 L1165.7,312.7 L1166.2,310.5 L1166.7,308.3 L1167.2,306.2 L1167.7,304.0 L1168.2,301.8 L1168.7,299.2 L1169.2,294.5 L1169.8,289.7 L1170.3,285.3 L1170.9,281.4 L1171.4,277.9 L1172.0,275.0 L1172.5,272.7 L1173.1,271.0 L1173.6,270.3 L1174.1,271.0 L1174.7,272.7 L1175.2,275.0 L1175.7,277.9 L1176.3,281.4 L1176.8,285.3 L1177.3,289.7 L1177.9,294.5 L1178.4,298.8 L1178.4,360.5 L50,360.5 Z" fill="url(#g)" stroke="#0c0d0e" stroke-width="1.2"/>
  <g stroke="#9aa0a4" stroke-width="1" stroke-dasharray="1.5,1.5" opacity="0.12">
    <path d="M50,252.5 H1178 M50,266 H1178 M50,279.5 H1178 M50,293 H1178 M50,306.5 H1178 M50,320 H1178 M50,333.5 H1178 M50,347 H1178"/>
    <path d="M101.5,252 V360 M153,252 V360 M204.5,252 V360 M256,252 V360 M307,252 V360 M358.5,252 V360 M410,252 V360 M461,252 V360 M512,252 V360 M563.5,252 V360 M615,252 V360 M666,252 V360 M717.5,252 V360 M769,252 V360 M820,252 V360 M871,252 V360 M922.5,252 V360 M974,252 V360 M1025,252 V360 M1076,252 V360 M1127.5,252 V360 M1178,252 V360"/>
  </g>
  
  <rect x="127.5" y="266" width="10.5" height="94" fill="#c8c8d0" opacity="0.38"/>
  <path d="M50.5,252 V361 H1178" fill="none" stroke="#5cc6a8" stroke-width="1.6"/>
  <path d="M50,360.5 H1178" stroke="#8ad0ff" stroke-width="1.4"/>
  <!-- y labels -->
  <g font-family="Liberation Sans" font-size="11" fill="#7fcfb0" text-anchor="end">
    <text x="44" y="256.2">80</text><text x="44" y="270">70</text><text x="44" y="283.2">60</text><text x="44" y="297">50</text><text x="44" y="310.2">40</text><text x="44" y="324">30</text><text x="44" y="337">20</text><text x="44" y="350.4">10</text><text x="44" y="363">2</text>
  </g>
  <g font-family="Liberation Sans" font-size="11" fill="#7fcfb0" text-anchor="middle">
    <text x="102" y="375.7">87.0</text><text x="154" y="375.7">88.0</text><text x="205" y="375.7">89.0</text><text x="256.5" y="375.7">90.0</text>
    <text x="307.5" y="375.7">91.0</text><text x="359" y="375.7">92.0</text><text x="410.5" y="375.7">93.0</text><text x="461.5" y="375.7">94.0</text>
    <text x="512.5" y="375.7">95.0</text><text x="564" y="375.7">96.0</text><text x="615.5" y="375.7">97.0</text><text x="666.5" y="375.7">98.0</text>
    <text x="718" y="375.7">99.0</text><text x="770" y="375.7">100.0</text><text x="821" y="375.7">101.0</text><text x="872" y="375.7">102.0</text>
    <text x="923.5" y="375.7">103.0</text><text x="975" y="375.7">104.0</text><text x="1026" y="375.7">105.0</text><text x="1077" y="375.7">106.0</text>
    <text x="1129" y="375.7">107.0</text>
  </g>
  <!-- S meter -->
  <rect x="80" y="256" width="230" height="10" fill="#1a1c1e" opacity="0.6"/>
  <rect x="80.5" y="252.5" width="94" height="4" fill="#30b838"/>
  <rect x="174.5" y="252.5" width="136" height="4" fill="#4a5350" opacity="0.85"/>
  <rect x="80" y="252.5" width="2" height="13.5" fill="#3fcf6a"/>
  <text x="69.5" y="259.5" font-family="Liberation Sans" font-size="9.5" font-weight="bold" fill="#eee">S</text>
  <g font-family="Liberation Sans" font-size="10" fill="#f4f4f4" text-anchor="middle" stroke="#f4f4f4" stroke-width="0.25">
    <text x="93" y="266">1</text><text x="117" y="266">3</text><text x="141" y="266">5</text><text x="165" y="266">7</text><text x="189" y="266">9</text>
    <text x="206.5" y="266">+10</text><text x="226" y="266">+20</text><text x="246" y="266">+30</text><text x="266.5" y="266">+40</text><text x="286" y="266">+50</text><text x="307" y="266">+60</text>
  </g>
</svg>

<!-- spectrum buttons -->
<div class="a" style="left:933px;top:255px;width:32px;height:24px;border-radius:5px;background:rgba(95,190,170,0.8);box-shadow:0 0 8px rgba(95,200,180,0.5)"></div>
<div class="a" style="left:973px;top:255px;width:32px;height:24px;border-radius:5px;background:rgba(75,140,120,0.75)"></div>
<div class="a" style="left:1013px;top:255px;width:32px;height:24px;border-radius:5px;background:rgba(95,190,170,0.8);box-shadow:0 0 8px rgba(95,200,180,0.5)"></div>
<div class="a" style="left:1053px;top:255px;width:32px;height:24px;border-radius:5px;background:rgba(95,190,170,0.8);box-shadow:0 0 8px rgba(95,200,180,0.5)"></div>
<div class="a" style="left:1093px;top:255px;width:32px;height:24px;border-radius:5px;background:rgba(75,140,120,0.75)"></div>
<div class="a" style="left:1133px;top:255px;width:32px;height:24px;border-radius:5px;background:rgba(75,140,120,0.75)"></div>
<svg style="left:933px;top:255px" width="232" height="24" viewBox="0 0 232 24">
  <path d="M11,7 H16 V17 M12.5,14 L16,18 L19.5,14" fill="none" stroke="#16221e" stroke-width="2.2" stroke-linecap="round" stroke-linejoin="round"/>
  <path d="M50,18 L56,6 L62,18 M52.5,14 H59.5" fill="none" stroke="#16221e" stroke-width="1.8" stroke-linecap="round" stroke-linejoin="round"/>
  <path d="M96,5.5 V18.5 M93,8.5 L96,5.5 L99,8.5 M93,15.5 L96,18.5 L99,15.5" fill="none" stroke="#16221e" stroke-width="1.8" stroke-linecap="round" stroke-linejoin="round"/>
  <path d="M129,7 V17.5 H142" fill="none" stroke="#16221e" stroke-width="1.8" stroke-linecap="round"/>
  <path d="M131.5,15.5 V12 L134,9.5 L136,11 L138,9.5 L140.5,12 V15.5 Z" fill="#16221e"/>
  <rect x="171" y="7.5" width="3" height="9" rx="1" fill="#16221e"/><rect x="176" y="7.5" width="3" height="9" rx="1" fill="#16221e"/>
  <path d="M210,11 a6,6 0 0 1 11,-2 M222,13 a6,6 0 0 1 -11,2" fill="none" stroke="#16221e" stroke-width="1.8"/>
  <path d="M219,6.5 L222,9.5 L219,10 Z M213,17.5 L210,14.5 L213,14 Z" fill="#16221e" stroke="#16221e" stroke-width="1"/>
</svg>

<!-- SIGNAL HISTORY GRAPH -->
<svg style="left:0;top:380px" width="1190" height="150" viewBox="0 380 1190 150">
  <g stroke="#25292c" stroke-width="1">
    <path d="M68,396 H1135 M68,455 H1135 M68,514 H1135"/>
  </g>
  <path d="M22,431 L800,431 L823,504 L880,504 L900,503 L1016,503 L1038,497 L1180,496.5 L1180,523.5 L22,523.5 Z" fill="#1e2226"/>
  <path d="M68,455 H800 M68,514 H1135" stroke="#262b2e" stroke-width="1"/>
  <path d="M22,431 L800,431 L823,504 L880,504 L900,503 L1016,503 L1038,497 L1180,496.5" fill="none" stroke="#5cbf9c" stroke-width="1.9"/>
  <g font-family="Liberation Sans" font-size="11.5" fill="#7fcfb0">
    <text x="59" y="399" text-anchor="end">100.0</text><text x="59" y="458" text-anchor="end">50.0</text><text x="59" y="517" text-anchor="end">0.0</text>
    <text x="1143" y="399">100.0</text><text x="1143" y="458">50.0</text><text x="1143" y="517">0.0</text>
  </g>
</svg>

<!-- ROW 1 -->
<div class="a" style="left:21px;top:545px;width:80px;height:90px;border-radius:14px;background:#52b894"></div>
<div class="a" style="left:55px;top:583px;width:13px;height:13px;border-radius:2px;background:#1f2322"></div>
<div class="p" style="left:121px;top:545px;width:354px;height:89px"></div>
<div class="p" style="left:494px;top:545px;width:215px;height:89px;background:#22352f"></div>
<svg style="left:0;top:0" width="1190" height="700" viewBox="0 0 1190 700">
  <defs><radialGradient id="rg" cx="0.5" cy="0.5" r="0.5"><stop offset="0" stop-color="#fbfff8"/><stop offset="0.4" stop-color="#f0fde8"/><stop offset="0.62" stop-color="#a8e893"/><stop offset="1" stop-color="#9ee08a"/></radialGradient></defs>
  <circle cx="600.8" cy="590.2" r="19" fill="#1b2b24" opacity="0.55"/>
  <circle cx="600.8" cy="590.2" r="14.2" fill="url(#rg)"/>
  <path d="M587.8,577.5 Q579,590.2 587.8,603" fill="none" stroke="#f6f6f6" stroke-width="3.8" stroke-linecap="round"/>
  <path d="M613.8,577.5 Q622.6,590.2 613.8,603" fill="none" stroke="#f6f6f6" stroke-width="3.8" stroke-linecap="round"/>
  <path d="M577.2,581.5 Q573,590.2 577.2,599" fill="none" stroke="#b6e77e" stroke-width="3.8" stroke-linecap="round"/>
  <path d="M624.4,581.5 Q628.6,590.2 624.4,599" fill="none" stroke="#8fd9a2" stroke-width="3.8" stroke-linecap="round"/>
</svg>
<div class="p" style="left:729px;top:545px;width:334px;height:89px"></div>
<div class="t c h" style="left:729px;width:334px;text-align:center;top:561px;transform:scaleX(0.88)">No PTY</div>
<div class="t" style="left:796px;top:598px;font-size:19px;font-weight:bold;color:#8a8f92;-webkit-text-stroke:0.5px #8a8f92">TP</div>
<div class="t" style="left:836px;top:598px;font-size:19px;font-weight:bold;color:#8a8f92;-webkit-text-stroke:0.5px #8a8f92">TA</div>
<svg style="left:923px;top:599px" width="26" height="17" viewBox="0 0 26 17">
  <circle cx="8.5" cy="8.5" r="6.3" fill="none" stroke="#f0f0f0" stroke-width="2.4"/><circle cx="17.5" cy="8.5" r="6.3" fill="none" stroke="#f0f0f0" stroke-width="2.4"/>
</svg>
<div class="t" style="left:964px;top:598px;font-size:19px;font-weight:bold;color:#8a8f92;-webkit-text-stroke:0.5px #8a8f92">MS</div>
<div class="p" style="left:1083px;top:545px;width:98px;height:420px"></div>
<div class="t h" style="left:1117px;top:561px">AF</div>

<!-- ROW 2 -->
<div class="p" style="left:21px;top:655px;width:334px;height:122px"></div>
<div class="t c h" style="left:21px;width:334px;text-align:center;top:671px;transform:scaleX(0.88)">PI CODE</div>
<div class="t" style="left:21px;width:334px;text-align:center;top:715px;font-size:48px;color:#9a9da0;-webkit-text-stroke:1px #1e2226">?</div>
<div class="p" style="left:375px;top:655px;width:334px;height:122px"></div>
<div class="t c h" style="left:375px;width:334px;text-align:center;top:671px;transform:scaleX(0.88)">FREQUENCY</div>
<div class="t" style="left:375px;width:334px;text-align:center;top:704px;font-size:12px;color:#b8bcbe">87.500</div>
<div class="t c thin" style="left:375px;width:334px;text-align:center;top:716px;font-size:50px;color:#fff;transform:scaleX(1.02)">87.600</div>
<div class="p" style="left:729px;top:655px;width:334px;height:122px"></div>
<div class="t c h" style="left:729px;width:334px;text-align:center;top:671px;transform:scaleX(0.88)">SIGNAL</div>
<svg style="left:864px;top:702px" width="14" height="14" viewBox="0 0 14 14"><path d="M7,1.5 V12.8 M2.5,6 L7,1.5 L11.5,6" fill="none" stroke="#c8cccd" stroke-width="1.6" stroke-linecap="round" stroke-linejoin="round"/></svg>
<div class="t" style="left:879px;top:702px;font-size:13.5px;color:#c8cccd;transform:scaleX(0.9);transform-origin:left top">19.6 dBf</div>
<div class="t thin" style="left:829px;top:716px;font-size:49px;color:#fff;transform:scaleX(0.92);transform-origin:left top">19<span style="color:#e6e8e9">.</span><span style="color:#b9bdbf">3</span></div>
<div class="t thin2" style="left:929px;top:737px;font-size:25px;color:#9da2a4;transform:scaleX(0.95);transform-origin:left top">dBf</div>

<!-- ROW 3 -->
<div class="a" style="left:21px;top:720px;width:106px;height:78px;background:#1d2023;border:1px solid #3f8f76"></div>
<div class="t" style="left:21px;width:106px;text-align:center;top:733px;font-size:16px;color:#6cc9a6;-webkit-text-stroke:0.4px #1d2023">West</div>
<div class="t" style="left:21px;width:106px;text-align:center;top:771px;font-size:16px;color:#6cc9a6;-webkit-text-stroke:0.4px #1d2023">South</div>
<div class="a" style="left:21px;top:798px;width:106px;height:48px;border-radius:0 0 14px 14px;background:#5dd6a6"></div>
<div class="t" style="left:31px;top:816px;font-size:13px;color:#22302b">South</div>
<svg style="left:107px;top:815px" width="14" height="10" viewBox="0 0 14 10"><path d="M3,7 L7,3 L11,7" fill="none" stroke="#22302b" stroke-width="1.6" stroke-linecap="round"/></svg>

<div class="a" style="left:142px;top:798px;width:213px;height:48px;border-radius:14px;overflow:hidden;background:#52b894">
  <div style="position:absolute;left:0;top:0;width:107px;height:48px;background:#36735f"></div>
</div>
<div class="t" style="left:142px;width:107px;text-align:center;top:816px;font-size:13px;font-weight:bold;color:#13261e;transform:scaleX(0.9)">cEQ</div>
<div class="t" style="left:249px;width:106px;text-align:center;top:816px;font-size:13px;font-weight:bold;color:#13261e;transform:scaleX(0.9)">iMS</div>

<div class="a" style="left:375px;top:798px;width:334px;height:48px;border-radius:14px;overflow:hidden;background:#1e2226">
  <div style="position:absolute;left:0;top:0;width:83px;height:48px;background:#52b894"></div>
  <div style="position:absolute;right:0;top:0;width:84px;height:48px;background:#52b894"></div>
</div>
<svg style="left:410px;top:814px" width="12" height="16" viewBox="0 0 12 16"><path d="M8,2.5 L3.5,8 L8,13.5" fill="none" stroke="#1c2622" stroke-width="2" stroke-linecap="round" stroke-linejoin="round"/></svg>
<svg style="left:661px;top:814px" width="12" height="16" viewBox="0 0 12 16"><path d="M4,2.5 L8.5,8 L4,13.5" fill="none" stroke="#1c2622" stroke-width="2" stroke-linecap="round" stroke-linejoin="round"/></svg>
<div class="t" style="left:480px;top:815px;font-size:13px;color:#9aa0a2;transform:scaleX(0.95);transform-origin:left top">Frequency</div>

<div class="a" style="left:729px;top:798px;width:256px;height:48px;border-radius:14px;background:#52b894;overflow:hidden">
  <div style="position:absolute;left:207px;top:0;width:49px;height:48px;border-radius:14px;background:#5dd6a6"></div>
</div>
<svg style="left:950px;top:813px" width="22" height="18" viewBox="0 0 22 18">
  <path d="M2,6.5 H5.5 L10,2.5 V15.5 L5.5,11.5 H2 Z" fill="#3c9c7c"/>
  <path d="M13,6 Q15,9 13,12 M15.5,4 Q19,9 15.5,14" fill="none" stroke="#3c9c7c" stroke-width="1.6" stroke-linecap="round"/>
</svg>
<div class="a" style="left:1000px;top:798px;width:63px;height:48px;border-radius:14px;background:#3a7462"></div>
<svg style="left:1022px;top:813px" width="18" height="18" viewBox="0 0 18 18">
  <path d="M3,2 V16" stroke="#161d1a" stroke-width="2.4" stroke-linecap="round"/>
  <path d="M3.5,2.5 Q7,1 10,2.5 Q13,4 15.5,2.5 V10.5 Q13,12 10,10.5 Q7,9 3.5,10.5 Z" fill="#161d1a"/>
</svg>

<!-- ROW 4 -->
<div class="p" style="left:21px;top:866px;width:688px;height:100px"></div>
<div class="a" style="left:214px;top:866px;width:2px;height:14px;background:#2a2f33"></div>
<div class="t c h" style="left:21px;width:688px;text-align:center;top:878px;transform:scaleX(0.88)">RADIOTEXT</div>
<div class="p" style="left:729px;top:866px;width:334px;height:100px"></div>

<!-- ROW 5 presets -->
<div id="presets"></div>
<div class="p" style="left:21px;top:986px;width:105px;height:48px;border-radius:11px"></div>
<div class="t" style="left:52px;top:996px;font-family:'Liberation Mono',monospace;font-size:14px;color:#fff;-webkit-text-stroke:0.35px #fff">102.2</div>
<div class="t" style="left:52px;top:1014px;font-family:'Liberation Mono',monospace;font-size:14px;font-weight:bold;color:#fff">71006</div>
<svg style="left:99px;top:992px" width="18" height="11" viewBox="0 0 18 11">
  <path d="M1,1 V4 M1,1 H3 M3,1 V3 M5,1 L5,10 M4,2 H6.5 M8,1 a1.5,1.5 0 1 0 0.1,0" fill="none" stroke="#fff" stroke-width="1.3"/>
  <path d="M13,2 L14.5,1 V9" fill="none" stroke="#fff" stroke-width="1.4"/>
</svg>
<div class="p" style="left:138.3px;top:986px;width:105px;height:48px;border-radius:11px"></div>
<svg style="left:155.8px;top:991px" width="70" height="38" viewBox="0 0 70 38">
  <circle cx="35" cy="18.8" r="13" fill="none" stroke="#2c3a30" stroke-width="3"/>
  <path d="M21.6,3.8 Q3.6,19 21.6,34.4" fill="none" stroke="#383f46" stroke-width="3" stroke-linecap="round"/>
  <path d="M48.4,3.8 Q66.4,19 48.4,34.4" fill="none" stroke="#383f46" stroke-width="3" stroke-linecap="round"/>
  <path d="M10,9 Q0.8,19 10,29" fill="none" stroke="#2f3a32" stroke-width="2.8" stroke-linecap="round"/>
  <path d="M60,9 Q69.2,19 60,29" fill="none" stroke="#2f3a32" stroke-width="2.8" stroke-linecap="round"/>
</svg>
<div class="t" style="left:173.8px;top:1005px;font-family:'Liberation Mono',monospace;font-size:14px;color:#fff;-webkit-text-stroke:0.35px #fff">87.8</div>
<svg style="left:210.3px;top:1000px" width="18" height="11" viewBox="0 0 18 11">
  <path d="M1,1 V4 M1,1 H3 M3,1 V3 M5,1 L5,10 M4,2 H6.5 M8,1 a1.5,1.5 0 1 0 0.1,0" fill="none" stroke="#fff" stroke-width="1.3"/>
  <path d="M13,2 L14.5,1 V9" fill="none" stroke="#fff" stroke-width="1.4"/></svg>
<div class="p" style="left:255.6px;top:986px;width:105px;height:48px;border-radius:11px"></div>
<svg style="left:273.1px;top:991px" width="70" height="38" viewBox="0 0 70 38">
  <circle cx="35" cy="18.8" r="13" fill="none" stroke="#2c3a30" stroke-width="3"/>
  <path d="M21.6,3.8 Q3.6,19 21.6,34.4" fill="none" stroke="#383f46" stroke-width="3" stroke-linecap="round"/>
  <path d="M48.4,3.8 Q66.4,19 48.4,34.4" fill="none" stroke="#383f46" stroke-width="3" stroke-linecap="round"/>
  <path d="M10,9 Q0.8,19 10,29" fill="none" stroke="#2f3a32" stroke-width="2.8" stroke-linecap="round"/>
  <path d="M60,9 Q69.2,19 60,29" fill="none" stroke="#2f3a32" stroke-width="2.8" stroke-linecap="round"/>
</svg>
<div class="t" style="left:255.6px;width:105px;text-align:center;top:1005px;font-family:'Liberation Mono',monospace;font-size:14px;color:#fff;-webkit-text-stroke:0.35px #fff">87.5</div>
<div class="p" style="left:372.9px;top:986px;width:105px;height:48px;border-radius:11px"></div>
<svg style="left:390.4px;top:991px" width="70" height="38" viewBox="0 0 70 38">
  <circle cx="35" cy="18.8" r="13" fill="none" stroke="#2c3a30" stroke-width="3"/>
  <path d="M21.6,3.8 Q3.6,19 21.6,34.4" fill="none" stroke="#383f46" stroke-width="3" stroke-linecap="round"/>
  <path d="M48.4,3.8 Q66.4,19 48.4,34.4" fill="none" stroke="#383f46" stroke-width="3" stroke-linecap="round"/>
  <path d="M10,9 Q0.8,19 10,29" fill="none" stroke="#2f3a32" stroke-width="2.8" stroke-linecap="round"/>
  <path d="M60,9 Q69.2,19 60,29" fill="none" stroke="#2f3a32" stroke-width="2.8" stroke-linecap="round"/>
</svg>
<div class="t" style="left:372.9px;width:105px;text-align:center;top:1005px;font-family:'Liberation Mono',monospace;font-size:14px;color:#fff;-webkit-text-stroke:0.35px #fff">87.5</div>
<div class="p" style="left:490.2px;top:986px;width:105px;height:48px;border-radius:11px"></div>
<svg style="left:507.70000000000005px;top:991px" width="70" height="38" viewBox="0 0 70 38">
  <circle cx="35" cy="18.8" r="13" fill="none" stroke="#2c3a30" stroke-width="3"/>
  <path d="M21.6,3.8 Q3.6,19 21.6,34.4" fill="none" stroke="#383f46" stroke-width="3" stroke-linecap="round"/>
  <path d="M48.4,3.8 Q66.4,19 48.4,34.4" fill="none" stroke="#383f46" stroke-width="3" stroke-linecap="round"/>
  <path d="M10,9 Q0.8,19 10,29" fill="none" stroke="#2f3a32" stroke-width="2.8" stroke-linecap="round"/>
  <path d="M60,9 Q69.2,19 60,29" fill="none" stroke="#2f3a32" stroke-width="2.8" stroke-linecap="round"/>
</svg>
<div class="t" style="left:490.2px;width:105px;text-align:center;top:1005px;font-family:'Liberation Mono',monospace;font-size:14px;color:#fff;-webkit-text-stroke:0.35px #fff">87.5</div>
<div class="p" style="left:607.5px;top:986px;width:105px;height:48px;border-radius:11px"></div>
<svg style="left:625.0px;top:991px" width="70" height="38" viewBox="0 0 70 38">
  <circle cx="35" cy="18.8" r="13" fill="none" stroke="#2c3a30" stroke-width="3"/>
  <path d="M21.6,3.8 Q3.6,19 21.6,34.4" fill="none" stroke="#383f46" stroke-width="3" stroke-linecap="round"/>
  <path d="M48.4,3.8 Q66.4,19 48.4,34.4" fill="none" stroke="#383f46" stroke-width="3" stroke-linecap="round"/>
  <path d="M10,9 Q0.8,19 10,29" fill="none" stroke="#2f3a32" stroke-width="2.8" stroke-linecap="round"/>
  <path d="M60,9 Q69.2,19 60,29" fill="none" stroke="#2f3a32" stroke-width="2.8" stroke-linecap="round"/>
</svg>
<div class="t" style="left:607.5px;width:105px;text-align:center;top:1005px;font-family:'Liberation Mono',monospace;font-size:14px;color:#fff;-webkit-text-stroke:0.35px #fff">87.5</div>
<div class="p" style="left:724.8px;top:986px;width:105px;height:48px;border-radius:11px"></div>
<svg style="left:742.3px;top:991px" width="70" height="38" viewBox="0 0 70 38">
  <circle cx="35" cy="18.8" r="13" fill="none" stroke="#2c3a30" stroke-width="3"/>
  <path d="M21.6,3.8 Q3.6,19 21.6,34.4" fill="none" stroke="#383f46" stroke-width="3" stroke-linecap="round"/>
  <path d="M48.4,3.8 Q66.4,19 48.4,34.4" fill="none" stroke="#383f46" stroke-width="3" stroke-linecap="round"/>
  <path d="M10,9 Q0.8,19 10,29" fill="none" stroke="#2f3a32" stroke-width="2.8" stroke-linecap="round"/>
  <path d="M60,9 Q69.2,19 60,29" fill="none" stroke="#2f3a32" stroke-width="2.8" stroke-linecap="round"/>
</svg>
<div class="t" style="left:724.8px;width:105px;text-align:center;top:1005px;font-family:'Liberation Mono',monospace;font-size:14px;color:#fff;-webkit-text-stroke:0.35px #fff">87.5</div>
<div class="p" style="left:842.1px;top:986px;width:105px;height:48px;border-radius:11px"></div>
<svg style="left:859.6px;top:991px" width="70" height="38" viewBox="0 0 70 38">
  <circle cx="35" cy="18.8" r="13" fill="none" stroke="#2c3a30" stroke-width="3"/>
  <path d="M21.6,3.8 Q3.6,19 21.6,34.4" fill="none" stroke="#383f46" stroke-width="3" stroke-linecap="round"/>
  <path d="M48.4,3.8 Q66.4,19 48.4,34.4" fill="none" stroke="#383f46" stroke-width="3" stroke-linecap="round"/>
  <path d="M10,9 Q0.8,19 10,29" fill="none" stroke="#2f3a32" stroke-width="2.8" stroke-linecap="round"/>
  <path d="M60,9 Q69.2,19 60,29" fill="none" stroke="#2f3a32" stroke-width="2.8" stroke-linecap="round"/>
</svg>
<div class="t" style="left:842.1px;width:105px;text-align:center;top:1005px;font-family:'Liberation Mono',monospace;font-size:14px;color:#fff;-webkit-text-stroke:0.35px #fff">87.5</div>
<div class="p" style="left:959.4px;top:986px;width:105px;height:48px;border-radius:11px"></div>
<svg style="left:976.9px;top:991px" width="70" height="38" viewBox="0 0 70 38">
  <circle cx="35" cy="18.8" r="13" fill="none" stroke="#2c3a30" stroke-width="3"/>
  <path d="M21.6,3.8 Q3.6,19 21.6,34.4" fill="none" stroke="#383f46" stroke-width="3" stroke-linecap="round"/>
  <path d="M48.4,3.8 Q66.4,19 48.4,34.4" fill="none" stroke="#383f46" stroke-width="3" stroke-linecap="round"/>
  <path d="M10,9 Q0.8,19 10,29" fill="none" stroke="#2f3a32" stroke-width="2.8" stroke-linecap="round"/>
  <path d="M60,9 Q69.2,19 60,29" fill="none" stroke="#2f3a32" stroke-width="2.8" stroke-linecap="round"/>
</svg>
<div class="t" style="left:959.4px;width:105px;text-align:center;top:1005px;font-family:'Liberation Mono',monospace;font-size:14px;color:#fff;-webkit-text-stroke:0.35px #fff">87.5</div>
<div class="p" style="left:1076.7px;top:986px;width:105px;height:48px;border-radius:11px"></div>
<svg style="left:1094.2px;top:991px" width="70" height="38" viewBox="0 0 70 38">
  <circle cx="35" cy="18.8" r="13" fill="none" stroke="#2c3a30" stroke-width="3"/>
  <path d="M21.6,3.8 Q3.6,19 21.6,34.4" fill="none" stroke="#383f46" stroke-width="3" stroke-linecap="round"/>
  <path d="M48.4,3.8 Q66.4,19 48.4,34.4" fill="none" stroke="#383f46" stroke-width="3" stroke-linecap="round"/>
  <path d="M10,9 Q0.8,19 10,29" fill="none" stroke="#2f3a32" stroke-width="2.8" stroke-linecap="round"/>
  <path d="M60,9 Q69.2,19 60,29" fill="none" stroke="#2f3a32" stroke-width="2.8" stroke-linecap="round"/>
</svg>
<div class="t" style="left:1076.7px;width:105px;text-align:center;top:1005px;font-family:'Liberation Mono',monospace;font-size:14px;color:#fff;-webkit-text-stroke:0.35px #fff">87.5</div>

<!-- PROTV logo -->
<svg style="left:0;top:0" width="1190" height="1109" viewBox="0 0 1190 1109">
  <rect x="1092.5" y="1068" width="75.5" height="30.5" fill="#0e0e0f" stroke="#b8b8b8" stroke-width="1.1"/>
  <rect x="1169" y="1068" width="10.5" height="30.5" fill="#0e0e0f" stroke="#b8b8b8" stroke-width="1.1"/>
  <defs><linearGradient id="tvg" x1="0" y1="0" x2="1" y2="1"><stop offset="0" stop-color="#5aa890"/><stop offset="0.35" stop-color="#8cc040"/><stop offset="0.55" stop-color="#e8d020"/><stop offset="0.75" stop-color="#e85a20"/><stop offset="1" stop-color="#d42020"/></linearGradient></defs>
  <path d="M1142,1071 L1152,1074 M1160,1074 L1166,1071" stroke="#888" stroke-width="0.8"/>
  <rect x="1139" y="1074" width="28" height="22.5" fill="url(#tvg)"/>
  <text x="1097.5" y="1092" font-family="Liberation Sans" font-weight="bold" font-size="19.5" fill="#fff" textLength="39" lengthAdjust="spacingAndGlyphs">PRO</text>
  <text x="1141" y="1093" font-family="Liberation Sans" font-size="20" fill="#fff" textLength="24" lengthAdjust="spacingAndGlyphs">TV</text>
  <text transform="translate(1177.8,1096) rotate(-90)" font-family="Liberation Sans" font-weight="bold" font-size="8" fill="#fff" textLength="26" lengthAdjust="spacingAndGlyphs">NET.UA</text>
</svg>

<!-- red arrows -->
<svg style="left:0;top:0" width="1190" height="1109" viewBox="0 0 1190 1109">
  <path d="M400.5,155 L325,67" stroke="#e41c1c" stroke-width="3" stroke-linecap="round"/>
  <path d="M318.8,58 L332.5,64.5 L321.5,73 Z" fill="#e41c1c" stroke="#e41c1c" stroke-width="1.6" stroke-linejoin="round"/>
  <path d="M290,703 L107,812" stroke="#e41c1c" stroke-width="3" stroke-linecap="round"/>
  <path d="M97,818 L104.5,806 L111,817 Z" fill="#e41c1c" stroke="#e41c1c" stroke-width="1.6" stroke-linejoin="round"/>
</svg>
</body></html>
